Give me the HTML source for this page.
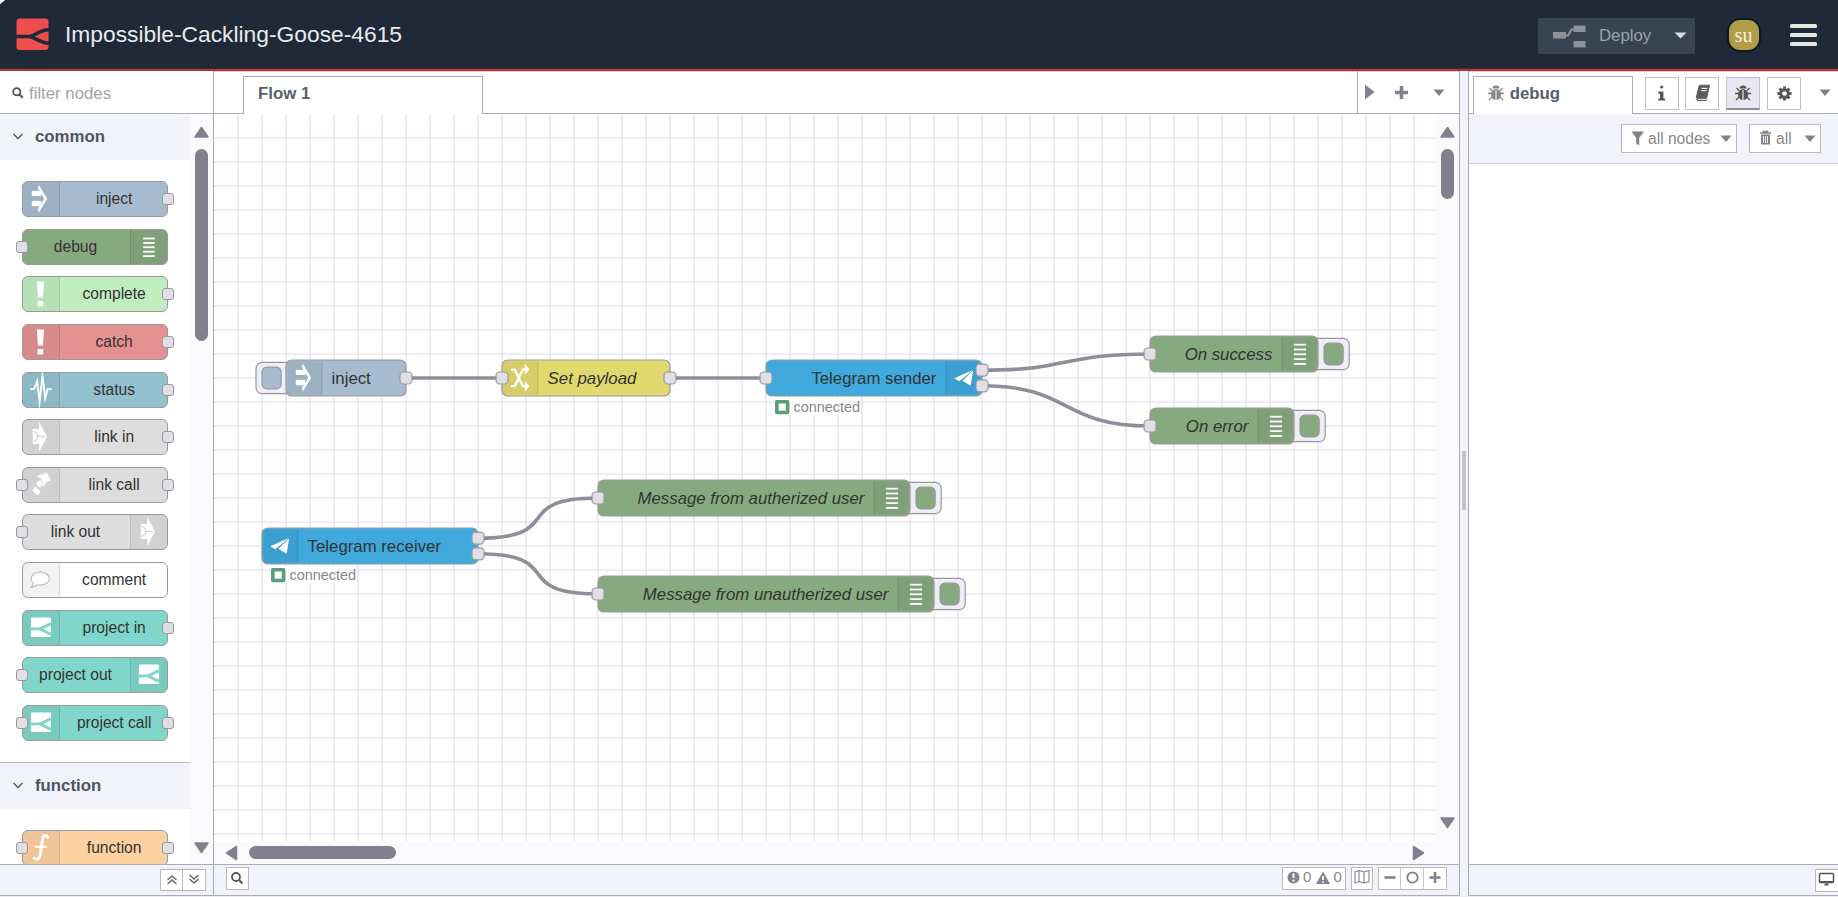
<!DOCTYPE html><html><head><meta charset="utf-8"><style>
*{box-sizing:border-box}
html,body{margin:0;padding:0}
body{width:1838px;height:897px;overflow:hidden;position:relative;background:#fff;font-family:"Liberation Sans",sans-serif;color:#333}
.abs{position:absolute}
#hdr{position:absolute;left:0;top:0;width:1838px;height:68px;background:#1f2937}
#hdrline{position:absolute;left:0;top:68px;width:1838px;height:4px;background:linear-gradient(to bottom,#5a1a24 0,#5a1a24 1px,#9f4149 1px,#9f4149 2px,#963b42 2px,#963b42 3px,#efc7ca 3px,#efc7ca 4px)}
#title{position:absolute;left:65px;top:21.3px;font-size:22.8px;color:#e8e9ec;white-space:nowrap;line-height:26px}
#deploy{position:absolute;left:1538px;top:17.5px;width:157px;height:36.5px;background:#394453}
#deploy .t{position:absolute;left:1600px;top:0}
/* palette */
#pal{position:absolute;left:0;top:71px;width:213px;height:824px;background:#fff}
.pn{position:absolute;left:22px;width:146px;height:36.2px;border:1px solid #9a9a9a;border-radius:6px}
.pi{position:absolute;top:0;width:37px;height:34.2px;background:rgba(0,0,0,0.05)}
.pi.L{left:0;border-right:1px solid rgba(0,0,0,0.1);border-radius:5px 0 0 5px}
.pi.R{right:0;border-left:1px solid rgba(0,0,0,0.1);border-radius:0 5px 5px 0}
.pi svg{position:absolute;left:0;top:-1px}
.pl{position:absolute;top:0.1px;height:33.5px;line-height:33.5px;font-size:15.6px;color:#333;text-align:center;white-space:nowrap}
.pl.L{left:38.3px;right:0}
.pl.R{left:-2px;right:37px}
.pp{position:absolute;top:11.4px;width:12px;height:12px;background:#dfdfe5;border:1px solid #999;border-radius:3px}
.pp.in{left:-7px}
.pp.out{right:-7px}
/* canvas */
#cv{position:absolute;left:214px;top:114px}
.nd{stroke:#999;stroke-width:1}
.shade{fill:#000;fill-opacity:0.05;stroke:none}
.shadeb{stroke:#000;stroke-opacity:0.1;stroke-width:1;fill:none}
.nl{font-family:"Liberation Sans",sans-serif;font-size:14px;fill:#333}
.port{fill:#dfdfe5;stroke:#999;stroke-width:1}
.nbb{fill:#eeeef6;stroke:#999;stroke-width:1}
.nbt{stroke:#999;stroke-width:1}
.sbg{fill:#fff}
.sl{font-family:"Liberation Sans",sans-serif;font-size:12px;fill:#888}
.btn{position:absolute;background:#fff;border:1px solid #b7b7c0}
</style></head><body>
<div id="hdr"></div><div id="hdrline"></div>
<svg class="abs" style="left:0;top:0" width="8" height="8" viewBox="0 0 8 8"><path d="M0 0H5.2L0 4.2z" fill="#f4f7fb"/></svg>
<svg class="abs" style="left:16px;top:17.5px" width="33" height="33" viewBox="0 0 33 33"><rect x="0.5" y="0.5" width="32" height="31.5" rx="3" fill="#ee4e4e"/><path d="M0 18.5 C6 18.5 9 18.6 13 18.5 C19 18.2 24 11.5 33 11.8 M13 18.5 C19 19 24 25 33 25.2" fill="none" stroke="#1f2937" stroke-width="3.6"/></svg>
<div id="title">Impossible-Cackling-Goose-4615</div>
<div id="deploy"></div>
<svg class="abs" style="left:1550px;top:24px" width="40" height="26" viewBox="0 0 40 26"><g fill="#8b929c"><rect x="3" y="8" width="13" height="6.5"/><rect x="23.5" y="1.6" width="12" height="6.4"/><rect x="23.5" y="17" width="12" height="6.4"/></g><path d="M15 11.5L18 11.5 21.5 5.5 24 5.5" fill="none" stroke="#8b929c" stroke-width="2.2"/></svg>
<div class="abs" style="left:1599px;top:26px;font-size:16.8px;color:#9aa1ab;line-height:20px">Deploy</div>
<svg class="abs" style="left:1674px;top:32px" width="13" height="7" viewBox="0 0 13 7"><path d="M0.5 0.5h12l-6 6z" fill="#d7dbe0"/></svg>
<div class="abs" style="left:1726.5px;top:17.8px;width:34px;height:34.5px;border-radius:13px;border:2px solid #14161b;background:#b09d48;color:#f5f0dc;font-family:'Liberation Serif',serif;font-size:20px;text-align:center;line-height:31px">su</div>
<div class="abs" style="left:1789.5px;top:24px;width:27.5px;height:4.2px;background:#e5e8e3;border-radius:1.5px"></div>
<div class="abs" style="left:1789.5px;top:33px;width:27.5px;height:4.2px;background:#e5e8e3;border-radius:1.5px"></div>
<div class="abs" style="left:1789.5px;top:41.5px;width:27.5px;height:4.2px;background:#e5e8e3;border-radius:1.5px"></div>
<div id="pal">
</div>
<div class="abs" style="left:0;top:113px;width:213px;height:1px;background:#ababb6"></div>
<svg class="abs" style="left:12px;top:87px" width="12" height="12" viewBox="0 0 12 12"><circle cx="4.8" cy="4.8" r="3.6" fill="none" stroke="#555" stroke-width="1.8"/><path d="M7.5 7.5l3.3 3.3" stroke="#555" stroke-width="2.2"/></svg>
<div class="abs" style="left:29px;top:84px;font-size:16.8px;color:#a3a3a3;line-height:20px">filter nodes</div>
<div class="abs" style="left:0;top:114px;width:190px;height:46px;background:#f2f2fb"></div>
<svg class="abs" style="left:12px;top:132px" width="12" height="9" viewBox="0 0 12 9"><path d="M1.5 2l4.5 4.5 4.5-4.5" fill="none" stroke="#555" stroke-width="1.4"/></svg>
<div class="abs" style="left:35px;top:127px;font-size:16.8px;font-weight:bold;color:#4b5563;line-height:20px">common</div>
<div class="abs" style="left:0;top:762px;width:190px;height:1px;background:#b9b9c2"></div>
<div class="abs" style="left:0;top:763px;width:190px;height:46px;background:#f2f2fb"></div>
<svg class="abs" style="left:12px;top:781px" width="12" height="9" viewBox="0 0 12 9"><path d="M1.5 2l4.5 4.5 4.5-4.5" fill="none" stroke="#555" stroke-width="1.4"/></svg>
<div class="abs" style="left:35px;top:776px;font-size:16.8px;font-weight:bold;color:#4b5563;line-height:20px">function</div>
<div class="pn" style="top:180.6px;background:#a6bbcf">
<div class="pi L"><svg width="38" height="36" viewBox="0 0 38 36" style="position:absolute;left:-1px;top:-1px"><g fill="#fff"><rect x="9.8" y="9.9" width="9.4" height="5.1"/><rect x="9.8" y="19.9" width="9.4" height="5.3"/><path d="M16.9 3.9L25.2 17.75 16.9 31.6 15.7 28.5 22.2 17.75 15.7 7z"/></g></svg></div><div class="pl L">inject</div>
<div class="pp out"></div>
</div>
<div class="pn" style="top:228.5px;background:#87a980">
<div class="pi R"><svg width="38" height="36" viewBox="0 0 38 36" style="position:absolute;left:-1px;top:-1px"><g fill="#fff"><rect x="13.2" y="8.60" width="11.4" height="1.8"/><rect x="13.2" y="13.00" width="11.4" height="1.8"/><rect x="13.2" y="17.40" width="11.4" height="1.8"/><rect x="13.2" y="21.80" width="11.4" height="1.8"/><rect x="13.2" y="26.20" width="11.4" height="1.8"/></g></svg></div><div class="pl R">debug</div>
<div class="pp in"></div>
</div>
<div class="pn" style="top:275.9px;background:#c0edc0">
<div class="pi L"><svg width="38" height="36" viewBox="0 0 38 36" style="position:absolute;left:-1px;top:-1px"><g fill="#fff"><path d="M14.9 5.6H22.1L21 21.4H15.9z"/><rect x="15.6" y="25" width="5.6" height="5.4"/></g></svg></div><div class="pl L">complete</div>
<div class="pp out"></div>
</div>
<div class="pn" style="top:323.9px;background:#e49191">
<div class="pi L"><svg width="38" height="36" viewBox="0 0 38 36" style="position:absolute;left:-1px;top:-1px"><g fill="#fff"><path d="M14.9 5.6H22.1L21 21.4H15.9z"/><rect x="15.6" y="25" width="5.6" height="5.4"/></g></svg></div><div class="pl L">catch</div>
<div class="pp out"></div>
</div>
<div class="pn" style="top:371.7px;background:#94c1d0">
<div class="pi L"><svg width="38" height="36" viewBox="0 0 38 36" style="position:absolute;left:-1px;top:-1px"><path d="M8 17.1H12L15.2 9.1 17.6 30 20.5 3.7 23.2 26.4 25.6 17.1H29.9" fill="none" stroke="#fff" stroke-width="1.9" stroke-linejoin="miter" stroke-miterlimit="10"/></svg></div><div class="pl L">status</div>
<div class="pp out"></div>
</div>
<div class="pn" style="top:419.1px;background:#dddddd">
<div class="pi L"><svg width="38" height="36" viewBox="0 0 38 36" style="position:absolute;left:-1px;top:-1px"><path d="M17.2 2.9L25 17.4 17.2 32.4V25H10.7V9.9H17.2z" fill="#fff"/><path d="M10.7 12.4A5 5 0 0 1 10.7 22.4M15.7 17.4H23.5" fill="none" stroke="#d2d2d2" stroke-width="1.1"/></svg></div><div class="pl L">link in</div>
<div class="pp out"></div>
</div>
<div class="pn" style="top:466.7px;background:#dddddd">
<div class="pi L"><svg width="38" height="36" viewBox="0 0 38 36" style="position:absolute;left:-1px;top:-1px"><g fill="#fff"><path d="M14.5 9L24.8 5.8 28.8 13.4 25.2 14.6 21.5 19.4 18 15.8 19.6 11.7z"/><path d="M10.3 23.4L13.4 19.4 18.7 24.8 15.6 28.3z"/></g><circle cx="17.8" cy="16.9" r="3.4" fill="#fff" stroke="#d4d4d4" stroke-width="0.8"/></svg></div><div class="pl L">link call</div>
<div class="pp in"></div>
<div class="pp out"></div>
</div>
<div class="pn" style="top:514.1px;background:#dddddd">
<div class="pi R"><svg width="38" height="36" viewBox="0 0 38 36" style="position:absolute;left:-1px;top:-1px"><path d="M17.2 2.9L25 17.4 17.2 32.4V25H10.7V9.9H17.2z" fill="#fff"/><path d="M10.7 12.4A5 5 0 0 1 10.7 22.4M15.7 17.4H23.5" fill="none" stroke="#d2d2d2" stroke-width="1.1"/></svg></div><div class="pl R">link out</div>
<div class="pp in"></div>
</div>
<div class="pn" style="top:561.7px;background:#ffffff">
<div class="pi L"><svg width="38" height="36" viewBox="0 0 38 36" style="position:absolute;left:-1px;top:-1px"><path d="M18.3 10.1c5 0 9.1 2.9 9.1 6.5s-4.1 6.5-9.1 6.5c-1 0-2-.1-2.9-.3-2 1.6-4.4 2.6-6.5 2.6 1.3-1.2 2.4-2.6 2.6-4.1-1.6-1.2-2.4-2.8-2.4-4.7 0-3.6 4.1-6.5 9.2-6.5z" fill="#fff" stroke="#bdbdbd" stroke-width="1.1"/></svg></div><div class="pl L">comment</div>
</div>
<div class="pn" style="top:609.7px;background:#80d6cb">
<div class="pi L"><svg width="38" height="36" viewBox="0 0 38 36" style="position:absolute;left:-1px;top:-1px"><rect x="8.9" y="7.6" width="20.1" height="19.4" rx="1.2" fill="#fff"/><path d="M8.5 19C13.5 19 16.5 19 19 18.4 22.5 17.4 25 14.4 29.5 14.1M17.8 19C21.8 19.8 24.2 23.5 29.5 23.9" fill="none" stroke="#80d6cb" stroke-width="3"/></svg></div><div class="pl L">project in</div>
<div class="pp out"></div>
</div>
<div class="pn" style="top:657.1px;background:#80d6cb">
<div class="pi R"><svg width="38" height="36" viewBox="0 0 38 36" style="position:absolute;left:-1px;top:-1px"><rect x="8.9" y="7.6" width="20.1" height="19.4" rx="1.2" fill="#fff"/><path d="M8.5 19C13.5 19 16.5 19 19 18.4 22.5 17.4 25 14.4 29.5 14.1M17.8 19C21.8 19.8 24.2 23.5 29.5 23.9" fill="none" stroke="#80d6cb" stroke-width="3"/></svg></div><div class="pl R">project out</div>
<div class="pp in"></div>
</div>
<div class="pn" style="top:704.7px;background:#80d6cb">
<div class="pi L"><svg width="38" height="36" viewBox="0 0 38 36" style="position:absolute;left:-1px;top:-1px"><rect x="8.9" y="7.6" width="20.1" height="19.4" rx="1.2" fill="#fff"/><path d="M8.5 19C13.5 19 16.5 19 19 18.4 22.5 17.4 25 14.4 29.5 14.1M17.8 19C21.8 19.8 24.2 23.5 29.5 23.9" fill="none" stroke="#80d6cb" stroke-width="3"/></svg></div><div class="pl L">project call</div>
<div class="pp in"></div>
<div class="pp out"></div>
</div>
<div class="pn" style="top:830.1px;background:#fdd0a2">
<div class="pi L"><svg width="38" height="36" viewBox="0 0 38 36" style="position:absolute;left:-1px;top:-1px"><path d="M25.6 7.6C25 5.2 22.6 4.6 21.3 6.6 20.4 8.2 18.6 24 17.7 26.8 17 29.4 14.2 29.8 12.2 28" fill="none" stroke="#fff" stroke-width="2.9" stroke-linecap="round"/><path d="M13 16.8H24.5" stroke="#fff" stroke-width="2"/></svg></div><div class="pl L">function</div>
<div class="pp in"></div>
<div class="pp out"></div>
</div>
<div class="abs" style="left:190px;top:114px;width:23px;height:750px;background:#fafafc"></div>
<svg class="abs" style="left:193px;top:126px" width="17" height="12" viewBox="0 0 17 12"><path d="M8.5 1.5l6.5 9.5h-13z" fill="#81808e" stroke="#81808e" stroke-width="1.5" stroke-linejoin="round"/></svg>
<div class="abs" style="left:195px;top:149px;width:13px;height:192px;border-radius:6.5px;background:#81808e"></div>
<svg class="abs" style="left:193px;top:842px" width="17" height="12" viewBox="0 0 17 12"><path d="M8.5 10.5l6.5-9.5h-13z" fill="#81808e" stroke="#81808e" stroke-width="1.5" stroke-linejoin="round"/></svg>
<div class="abs" style="left:0;top:864px;width:213px;height:32px;background:#f2f2fb;border-top:1px solid #ababb6;border-bottom:1px solid #ababb6"></div>
<div class="btn" style="left:160px;top:869px;width:23px;height:22px"></div>
<div class="btn" style="left:182px;top:869px;width:24px;height:22px"></div>
<svg class="abs" style="left:165px;top:873px" width="14" height="14" viewBox="0 0 14 14"><path d="M2.5 7l4.5-4 4.5 4 M2.5 11l4.5-4 4.5 4" fill="none" stroke="#666" stroke-width="1.4"/></svg>
<svg class="abs" style="left:187px;top:872px" width="14" height="14" viewBox="0 0 14 14"><path d="M2.5 3l4.5 4 4.5-4 M2.5 7l4.5 4 4.5-4" fill="none" stroke="#666" stroke-width="1.4"/></svg>
<div class="abs" style="left:213px;top:71px;width:1px;height:825px;background:#ababb6"></div>
<div class="abs" style="left:214px;top:113px;width:1246px;height:1px;background:#ababb6"></div>
<div class="abs" style="left:243px;top:76px;width:240px;height:38px;background:#fff;border:1px solid #ababb6;border-bottom:none"></div>
<div class="abs" style="left:258px;top:84px;font-size:16.8px;font-weight:bold;color:#555f6b;line-height:20px">Flow 1</div>
<div class="abs" style="left:1357px;top:71px;width:1px;height:42px;background:#ababb6"></div>
<svg class="abs" style="left:1364px;top:84px" width="12" height="16" viewBox="0 0 12 16"><path d="M1 0.5l9.5 7.5-9.5 7.5z" fill="#81808e"/></svg>
<svg class="abs" style="left:1394px;top:85px" width="15" height="15" viewBox="0 0 15 15"><path d="M7.5 1v13 M1 7.5h13" stroke="#81808e" stroke-width="3.5"/></svg>
<svg class="abs" style="left:1433px;top:89px" width="12" height="8" viewBox="0 0 12 8"><path d="M0.5 0.5h11l-5.5 6.5z" fill="#81808e"/></svg>
<svg id="cv" width="1222" height="727" viewBox="0 0 1222 727"><rect width="1222" height="727" fill="#fff"/><g transform="scale(1.2)"><g stroke="#dcdbee" stroke-width="1"><line x1="20" y1="0" x2="20" y2="620"/><line x1="40" y1="0" x2="40" y2="620"/><line x1="60" y1="0" x2="60" y2="620"/><line x1="80" y1="0" x2="80" y2="620"/><line x1="100" y1="0" x2="100" y2="620"/><line x1="120" y1="0" x2="120" y2="620"/><line x1="140" y1="0" x2="140" y2="620"/><line x1="160" y1="0" x2="160" y2="620"/><line x1="180" y1="0" x2="180" y2="620"/><line x1="200" y1="0" x2="200" y2="620"/><line x1="220" y1="0" x2="220" y2="620"/><line x1="240" y1="0" x2="240" y2="620"/><line x1="260" y1="0" x2="260" y2="620"/><line x1="280" y1="0" x2="280" y2="620"/><line x1="300" y1="0" x2="300" y2="620"/><line x1="320" y1="0" x2="320" y2="620"/><line x1="340" y1="0" x2="340" y2="620"/><line x1="360" y1="0" x2="360" y2="620"/><line x1="380" y1="0" x2="380" y2="620"/><line x1="400" y1="0" x2="400" y2="620"/><line x1="420" y1="0" x2="420" y2="620"/><line x1="440" y1="0" x2="440" y2="620"/><line x1="460" y1="0" x2="460" y2="620"/><line x1="480" y1="0" x2="480" y2="620"/><line x1="500" y1="0" x2="500" y2="620"/><line x1="520" y1="0" x2="520" y2="620"/><line x1="540" y1="0" x2="540" y2="620"/><line x1="560" y1="0" x2="560" y2="620"/><line x1="580" y1="0" x2="580" y2="620"/><line x1="600" y1="0" x2="600" y2="620"/><line x1="620" y1="0" x2="620" y2="620"/><line x1="640" y1="0" x2="640" y2="620"/><line x1="660" y1="0" x2="660" y2="620"/><line x1="680" y1="0" x2="680" y2="620"/><line x1="700" y1="0" x2="700" y2="620"/><line x1="720" y1="0" x2="720" y2="620"/><line x1="740" y1="0" x2="740" y2="620"/><line x1="760" y1="0" x2="760" y2="620"/><line x1="780" y1="0" x2="780" y2="620"/><line x1="800" y1="0" x2="800" y2="620"/><line x1="820" y1="0" x2="820" y2="620"/><line x1="840" y1="0" x2="840" y2="620"/><line x1="860" y1="0" x2="860" y2="620"/><line x1="880" y1="0" x2="880" y2="620"/><line x1="900" y1="0" x2="900" y2="620"/><line x1="920" y1="0" x2="920" y2="620"/><line x1="940" y1="0" x2="940" y2="620"/><line x1="960" y1="0" x2="960" y2="620"/><line x1="980" y1="0" x2="980" y2="620"/><line x1="1000" y1="0" x2="1000" y2="620"/><line x1="1020" y1="0" x2="1020" y2="620"/><line x1="0" y1="20" x2="1030" y2="20"/><line x1="0" y1="40" x2="1030" y2="40"/><line x1="0" y1="60" x2="1030" y2="60"/><line x1="0" y1="80" x2="1030" y2="80"/><line x1="0" y1="100" x2="1030" y2="100"/><line x1="0" y1="120" x2="1030" y2="120"/><line x1="0" y1="140" x2="1030" y2="140"/><line x1="0" y1="160" x2="1030" y2="160"/><line x1="0" y1="180" x2="1030" y2="180"/><line x1="0" y1="200" x2="1030" y2="200"/><line x1="0" y1="220" x2="1030" y2="220"/><line x1="0" y1="240" x2="1030" y2="240"/><line x1="0" y1="260" x2="1030" y2="260"/><line x1="0" y1="280" x2="1030" y2="280"/><line x1="0" y1="300" x2="1030" y2="300"/><line x1="0" y1="320" x2="1030" y2="320"/><line x1="0" y1="340" x2="1030" y2="340"/><line x1="0" y1="360" x2="1030" y2="360"/><line x1="0" y1="380" x2="1030" y2="380"/><line x1="0" y1="400" x2="1030" y2="400"/><line x1="0" y1="420" x2="1030" y2="420"/><line x1="0" y1="440" x2="1030" y2="440"/><line x1="0" y1="460" x2="1030" y2="460"/><line x1="0" y1="480" x2="1030" y2="480"/><line x1="0" y1="500" x2="1030" y2="500"/><line x1="0" y1="520" x2="1030" y2="520"/><line x1="0" y1="540" x2="1030" y2="540"/><line x1="0" y1="560" x2="1030" y2="560"/><line x1="0" y1="580" x2="1030" y2="580"/><line x1="0" y1="600" x2="1030" y2="600"/></g><path d="M160 220C235 220 165 220 240 220" fill="none" stroke="#fff" stroke-opacity="0.4" stroke-width="5"/><path d="M160 220C235 220 165 220 240 220" fill="none" stroke="#8e8e99" stroke-width="3"/><path d="M380 220C455 220 385 220 460 220" fill="none" stroke="#fff" stroke-opacity="0.4" stroke-width="5"/><path d="M380 220C455 220 385 220 460 220" fill="none" stroke="#8e8e99" stroke-width="3"/><path d="M640 213.5C715 213.5 705 200 780 200" fill="none" stroke="#fff" stroke-opacity="0.4" stroke-width="5"/><path d="M640 213.5C715 213.5 705 200 780 200" fill="none" stroke="#8e8e99" stroke-width="3"/><path d="M640 226.5C715 226.5 705 260 780 260" fill="none" stroke="#fff" stroke-opacity="0.4" stroke-width="5"/><path d="M640 226.5C715 226.5 705 260 780 260" fill="none" stroke="#8e8e99" stroke-width="3"/><path d="M220 353.5C295 353.5 245 320 320 320" fill="none" stroke="#fff" stroke-opacity="0.4" stroke-width="5"/><path d="M220 353.5C295 353.5 245 320 320 320" fill="none" stroke="#8e8e99" stroke-width="3"/><path d="M220 366.5C295 366.5 245 400 320 400" fill="none" stroke="#fff" stroke-opacity="0.4" stroke-width="5"/><path d="M220 366.5C295 366.5 245 400 320 400" fill="none" stroke="#8e8e99" stroke-width="3"/><g transform="translate(60,205)"><rect class="nbb" x="-25" y="2" rx="5" ry="5" width="32" height="26"/><rect class="nbt" x="-20" y="6" rx="4" ry="4" width="16" height="18" fill="#a6bbcf"/><rect class="nd" rx="5" ry="5" width="100" height="30" fill="#a6bbcf"/><path class="shade" d="M5 1h25v28h-25a4 4 0 0 1-4-4v-20a4 4 0 0 1 4-4z"/><path class="shadeb" d="M30 1v28"/><g transform="translate(0,0)"><g transform="scale(0.833333)"><g fill="#fff"><rect x="9.8" y="9.9" width="9.4" height="5.1"/><rect x="9.8" y="19.9" width="9.4" height="5.3"/><path d="M16.9 3.9L25.2 17.75 16.9 31.6 15.7 28.5 22.2 17.75 15.7 7z"/></g></g></g><text class="nl" x="38" y="20" text-anchor="start">inject</text><rect class="port" x="95" y="10" rx="3" ry="3" width="10" height="10"/></g><g transform="translate(240,205)"><rect class="nd" rx="5" ry="5" width="140" height="30" fill="#e2d96e"/><path class="shade" d="M5 1h25v28h-25a4 4 0 0 1-4-4v-20a4 4 0 0 1 4-4z"/><path class="shadeb" d="M30 1v28"/><g transform="translate(0,0)"><g transform="scale(0.833333)"><g fill="none" stroke="#fff" stroke-width="2.4"><path d="M8.9 9.6H12.8L20.8 26.1H24"/><path d="M8.9 26.1H12.8L20.8 9.6H24"/></g><g fill="#fff"><path d="M22.8 3.8L27.3 9.4 22.8 14.8z"/><path d="M22.8 20.7L27.3 26.3 22.8 31.9z"/></g></g></g><text class="nl" x="38" y="20" font-style="italic" text-anchor="start">Set payload</text><rect class="port" x="-5" y="10" rx="3" ry="3" width="10" height="10"/><rect class="port" x="135" y="10" rx="3" ry="3" width="10" height="10"/></g><g transform="translate(460,205)"><rect class="nd" rx="5" ry="5" width="180" height="30" fill="#3fa9dd"/><path class="shade" d="M150 1h25a4 4 0 0 1 4 4v20a4 4 0 0 1-4 4h-25z"/><path class="shadeb" d="M150 1v28"/><g transform="translate(150,0)"><g transform="scale(0.833333)"><g fill="#fff"><path d="M8.3 18.2L26.8 10.1 21.6 14.6 13.2 21.2z"/><path d="M16.4 20.8L27.2 10.6 24.6 25.8z"/></g></g></g><text class="nl" x="142" y="20" text-anchor="end">Telegram sender</text><rect class="port" x="-5" y="10" rx="3" ry="3" width="10" height="10"/><rect class="port" x="175" y="3.5" rx="3" ry="3" width="10" height="10"/><rect class="port" x="175" y="16.5" rx="3" ry="3" width="10" height="10"/><rect class="sbg" x="8" y="32" width="60" height="14"/><rect x="9" y="34.8" width="9" height="9" fill="#fff" stroke="#5a9c7c" stroke-width="3" stroke-linejoin="round"/><text class="sl" x="23" y="43.3">connected</text></g><g transform="translate(780,185)"><rect class="nbb" x="134" y="2" rx="5" ry="5" width="32" height="26"/><rect class="nbt" x="145" y="6" rx="4" ry="4" width="16" height="18" fill="#87a980"/><rect class="nd" rx="5" ry="5" width="140" height="30" fill="#87a980"/><path class="shade" d="M110 1h25a4 4 0 0 1 4 4v20a4 4 0 0 1-4 4h-25z"/><path class="shadeb" d="M110 1v28"/><g transform="translate(110,0)"><g transform="scale(0.833333)"><g fill="#fff"><rect x="12" y="7.80" width="12" height="1.8"/><rect x="12" y="12.60" width="12" height="1.8"/><rect x="12" y="17.40" width="12" height="1.8"/><rect x="12" y="22.20" width="12" height="1.8"/><rect x="12" y="27.00" width="12" height="1.8"/></g></g></g><text class="nl" x="102" y="20" font-style="italic" text-anchor="end">On success</text><rect class="port" x="-5" y="10" rx="3" ry="3" width="10" height="10"/></g><g transform="translate(780,245)"><rect class="nbb" x="114" y="2" rx="5" ry="5" width="32" height="26"/><rect class="nbt" x="125" y="6" rx="4" ry="4" width="16" height="18" fill="#87a980"/><rect class="nd" rx="5" ry="5" width="120" height="30" fill="#87a980"/><path class="shade" d="M90 1h25a4 4 0 0 1 4 4v20a4 4 0 0 1-4 4h-25z"/><path class="shadeb" d="M90 1v28"/><g transform="translate(90,0)"><g transform="scale(0.833333)"><g fill="#fff"><rect x="12" y="7.80" width="12" height="1.8"/><rect x="12" y="12.60" width="12" height="1.8"/><rect x="12" y="17.40" width="12" height="1.8"/><rect x="12" y="22.20" width="12" height="1.8"/><rect x="12" y="27.00" width="12" height="1.8"/></g></g></g><text class="nl" x="82" y="20" font-style="italic" text-anchor="end">On error</text><rect class="port" x="-5" y="10" rx="3" ry="3" width="10" height="10"/></g><g transform="translate(40,345)"><rect class="nd" rx="5" ry="5" width="180" height="30" fill="#3fa9dd"/><path class="shade" d="M5 1h25v28h-25a4 4 0 0 1-4-4v-20a4 4 0 0 1 4-4z"/><path class="shadeb" d="M30 1v28"/><g transform="translate(0,0)"><g transform="scale(0.833333)"><g fill="#fff"><path d="M8.3 18.2L26.8 10.1 21.6 14.6 13.2 21.2z"/><path d="M16.4 20.8L27.2 10.6 24.6 25.8z"/></g></g></g><text class="nl" x="38" y="20" text-anchor="start">Telegram receiver</text><rect class="port" x="175" y="3.5" rx="3" ry="3" width="10" height="10"/><rect class="port" x="175" y="16.5" rx="3" ry="3" width="10" height="10"/><rect class="sbg" x="8" y="32" width="60" height="14"/><rect x="9" y="34.8" width="9" height="9" fill="#fff" stroke="#5a9c7c" stroke-width="3" stroke-linejoin="round"/><text class="sl" x="23" y="43.3">connected</text></g><g transform="translate(320,305)"><rect class="nbb" x="254" y="2" rx="5" ry="5" width="32" height="26"/><rect class="nbt" x="265" y="6" rx="4" ry="4" width="16" height="18" fill="#87a980"/><rect class="nd" rx="5" ry="5" width="260" height="30" fill="#87a980"/><path class="shade" d="M230 1h25a4 4 0 0 1 4 4v20a4 4 0 0 1-4 4h-25z"/><path class="shadeb" d="M230 1v28"/><g transform="translate(230,0)"><g transform="scale(0.833333)"><g fill="#fff"><rect x="12" y="7.80" width="12" height="1.8"/><rect x="12" y="12.60" width="12" height="1.8"/><rect x="12" y="17.40" width="12" height="1.8"/><rect x="12" y="22.20" width="12" height="1.8"/><rect x="12" y="27.00" width="12" height="1.8"/></g></g></g><text class="nl" x="222" y="20" font-style="italic" text-anchor="end">Message from autherized user</text><rect class="port" x="-5" y="10" rx="3" ry="3" width="10" height="10"/></g><g transform="translate(320,385)"><rect class="nbb" x="274" y="2" rx="5" ry="5" width="32" height="26"/><rect class="nbt" x="285" y="6" rx="4" ry="4" width="16" height="18" fill="#87a980"/><rect class="nd" rx="5" ry="5" width="280" height="30" fill="#87a980"/><path class="shade" d="M250 1h25a4 4 0 0 1 4 4v20a4 4 0 0 1-4 4h-25z"/><path class="shadeb" d="M250 1v28"/><g transform="translate(250,0)"><g transform="scale(0.833333)"><g fill="#fff"><rect x="12" y="7.80" width="12" height="1.8"/><rect x="12" y="12.60" width="12" height="1.8"/><rect x="12" y="17.40" width="12" height="1.8"/><rect x="12" y="22.20" width="12" height="1.8"/><rect x="12" y="27.00" width="12" height="1.8"/></g></g></g><text class="nl" x="242" y="20" font-style="italic" text-anchor="end">Message from unautherized user</text><rect class="port" x="-5" y="10" rx="3" ry="3" width="10" height="10"/></g></g></svg>
<div class="abs" style="left:1436px;top:114px;width:23px;height:750px;background:#fafafc"></div>
<div class="abs" style="left:214px;top:841px;width:1222px;height:23px;background:#fafafc"></div>
<svg class="abs" style="left:1439px;top:126px" width="17" height="12" viewBox="0 0 17 12"><path d="M8.5 1.5l6.5 9.5h-13z" fill="#81808e" stroke="#81808e" stroke-width="1.5" stroke-linejoin="round"/></svg>
<div class="abs" style="left:1441px;top:149px;width:13px;height:50px;border-radius:6.5px;background:#81808e"></div>
<svg class="abs" style="left:1439px;top:817px" width="17" height="12" viewBox="0 0 17 12"><path d="M8.5 10.5l6.5-9.5h-13z" fill="#81808e" stroke="#81808e" stroke-width="1.5" stroke-linejoin="round"/></svg>
<svg class="abs" style="left:225px;top:845px" width="13" height="16" viewBox="0 0 13 16"><path d="M1.5 8l10-6.5v13z" fill="#81808e" stroke="#81808e" stroke-width="1.5" stroke-linejoin="round"/></svg>
<div class="abs" style="left:249px;top:846px;width:147px;height:13px;border-radius:6.5px;background:#81808e"></div>
<svg class="abs" style="left:1412px;top:845px" width="13" height="16" viewBox="0 0 13 16"><path d="M11.5 8l-10-6.5v13z" fill="#81808e" stroke="#81808e" stroke-width="1.5" stroke-linejoin="round"/></svg>
<div class="abs" style="left:214px;top:864px;width:1246px;height:32px;background:#f2f2fb;border-top:1px solid #ababb6;border-bottom:1px solid #ababb6"></div>
<div class="btn" style="left:226px;top:867px;width:23px;height:23px"></div>
<svg class="abs" style="left:230px;top:871px" width="15" height="15" viewBox="0 0 15 15"><circle cx="6" cy="6" r="4" fill="none" stroke="#555" stroke-width="1.8"/><path d="M9 9l3.5 3.5" stroke="#555" stroke-width="2"/></svg>
<div class="btn" style="left:1282px;top:867px;width:64px;height:23px"></div>
<svg class="abs" style="left:1286.5px;top:870px" width="58" height="15" viewBox="0 0 58 15"><circle cx="6.5" cy="7.5" r="6" fill="#81808e"/><path d="M6.5 3.5v4.5" stroke="#fff" stroke-width="2"/><circle cx="6.5" cy="10.7" r="1.1" fill="#fff"/><path d="M36 1.5l7 12.5h-14z" fill="#81808e"/><path d="M36 6v4" stroke="#fff" stroke-width="1.8"/><circle cx="36" cy="12" r="0.9" fill="#fff"/></svg>
<div class="abs" style="left:1303px;top:868px;font-size:15px;color:#888;line-height:18px">0</div>
<div class="abs" style="left:1333.5px;top:868px;font-size:15px;color:#888;line-height:18px">0</div>
<div class="btn" style="left:1351px;top:867px;width:22px;height:23px"></div>
<svg class="abs" style="left:1353px;top:869px" width="18" height="16" viewBox="0 0 18 16"><path d="M2 3l4-1.5 5 1.5 5-1.5v11l-5 1.5-5-1.5-4 1.5z M6 1.5v11 M11 3v11" fill="none" stroke="#81808e" stroke-width="1.1"/></svg>
<div class="btn" style="left:1378px;top:867px;width:69px;height:23px"></div>
<div class="abs" style="left:1400px;top:868px;width:1px;height:21px;background:#c5c5cc"></div><div class="abs" style="left:1423px;top:868px;width:1px;height:21px;background:#c5c5cc"></div>
<svg class="abs" style="left:1378.5px;top:866px" width="69" height="23" viewBox="0 0 69 23"><path d="M5.5 11.5h11" stroke="#81808e" stroke-width="2.6"/><circle cx="33.5" cy="11.5" r="5.2" fill="none" stroke="#81808e" stroke-width="1.8"/><path d="M50.5 11.5h11 M56 6v11" stroke="#81808e" stroke-width="2.6"/></svg>
<div class="abs" style="left:1459px;top:71px;width:1px;height:825px;background:#ababb6"></div>
<div class="abs" style="left:1460px;top:71px;width:8px;height:825px;background:#f2f2fb"></div>
<div class="abs" style="left:1468px;top:71px;width:1px;height:825px;background:#ababb6"></div>
<div class="abs" style="left:1462px;top:451px;width:4px;height:59px;background:#c3c3cc"></div>
<div class="abs" style="left:1469px;top:113px;width:369px;height:1px;background:#ababb6"></div>
<div class="abs" style="left:1473px;top:76px;width:160px;height:38px;background:#fff;border:1px solid #ababb6;border-bottom:none"></div>
<svg class="abs" style="left:1487px;top:84px" width="18" height="17" viewBox="0 0 18 17"><g fill="#888"><ellipse cx="9" cy="10.5" rx="5" ry="5.5"/><path d="M5.5 4.5a3.5 3 0 0 1 7 0z"/></g><g stroke="#888" stroke-width="1.3" fill="none"><path d="M1 9.5h16 M2.5 4l2.5 2.5 M15.5 4l-2.5 2.5 M2 16l3-3 M16 16l-3-3"/></g><path d="M9 6v10" stroke="#fff" stroke-width="1"/></svg>
<div class="abs" style="left:1509.7px;top:84px;font-size:16.8px;font-weight:bold;color:#555f6b;line-height:20px">debug</div>
<div class="abs" style="left:1645px;top:77px;width:33.5px;height:33px;background:#fff;border:1px solid #c0c0c8;"></div>
<div class="abs" style="left:1685px;top:77px;width:33.5px;height:33px;background:#fff;border:1px solid #c0c0c8;"></div>
<div class="abs" style="left:1726px;top:77px;width:33.5px;height:33px;background:#e6e7f2;border:1px solid #c0c0c8;border-bottom:2px solid #8d8d99;"></div>
<div class="abs" style="left:1767px;top:77px;width:33.5px;height:33px;background:#fff;border:1px solid #c0c0c8;"></div>
<svg class="abs" style="left:1645px;top:77px" width="34" height="33" viewBox="0 0 34 33"><g fill="#555"><circle cx="16.7" cy="10" r="1.6"/><path d="M13.4 14.5h5v6.9h1.6v2.2h-6.6v-2.2h1.6v-4.7h-1.6z"/></g></svg>
<svg class="abs" style="left:1685px;top:77px" width="34" height="33" viewBox="0 0 34 33"><path d="M11.2 21.2l2.6-11.6c.3-.9.9-1.4 1.8-1.4h9l-2.8 12.2c-.2.8-.7 1.2-1.5 1.2h-7.3c-.9 0-1.5.6-1.2 1.3.2.5.6.7 1.2.7h8.3l.2-1" fill="#5c5c5c" stroke="#5c5c5c" stroke-width="1"/><path d="M16.6 11.4h5.8 M16.1 13.7h5.8" stroke="#fff" stroke-width="1"/><path d="M12.8 22.4h8" stroke="#fff" stroke-width="0.9"/></svg>
<svg class="abs" style="left:1734px;top:84px" width="18" height="17" viewBox="0 0 18 17"><g fill="#555"><ellipse cx="9" cy="10.5" rx="5" ry="5.5"/><path d="M5.5 4.5a3.5 3 0 0 1 7 0z"/></g><g stroke="#555" stroke-width="1.3" fill="none"><path d="M1 9.5h16 M2.5 4l2.5 2.5 M15.5 4l-2.5 2.5 M2 16l3-3 M16 16l-3-3"/></g><path d="M9 6v10" stroke="#fff" stroke-width="1"/></svg>
<svg class="abs" style="left:1775.5px;top:84.5px" width="17" height="17" viewBox="0 0 18 18"><g fill="#555"><circle cx="9" cy="9" r="5.5"/><g stroke="#555" stroke-width="3"><path d="M9 1.5v15 M1.5 9h15 M3.7 3.7l10.6 10.6 M14.3 3.7l-10.6 10.6"/></g></g><circle cx="9" cy="9" r="2.5" fill="#fff"/></svg>
<svg class="abs" style="left:1819px;top:89px" width="12" height="8" viewBox="0 0 12 8"><path d="M0.5 0.5h11l-5.5 6.5z" fill="#81808e"/></svg>
<div class="abs" style="left:1469px;top:114px;width:369px;height:50px;background:#f2f2fb;border-bottom:1px solid #cdcdd6"></div>
<div class="btn" style="left:1621px;top:124px;width:116px;height:29px"></div>
<svg class="abs" style="left:1631px;top:131px" width="14" height="15" viewBox="0 0 14 15"><path d="M0.5 0.5h12.5l-4.8 6.5v7.5l-3-2v-5.5z" fill="#81808e"/></svg>
<div class="abs" style="left:1648px;top:130px;font-size:15.6px;color:#888;line-height:18px">all nodes</div>
<svg class="abs" style="left:1720px;top:135px" width="12" height="8" viewBox="0 0 12 8"><path d="M0.5 0.5h11l-5.5 6.5z" fill="#81808e"/></svg>
<div class="btn" style="left:1749px;top:124px;width:72px;height:29px"></div>
<svg class="abs" style="left:1759px;top:130px" width="14" height="16" viewBox="0 0 14 16"><path d="M1 3h11 M4.5 3v-1.5h4v1.5" fill="none" stroke="#81808e" stroke-width="1.5"/><path d="M2 4.5h9v10h-9z" fill="#81808e"/><path d="M4.5 6v7 M6.5 6v7 M8.5 6v7" stroke="#fff" stroke-width="0.9"/></svg>
<div class="abs" style="left:1776px;top:130px;font-size:15.6px;color:#888;line-height:18px">all</div>
<svg class="abs" style="left:1804px;top:135px" width="12" height="8" viewBox="0 0 12 8"><path d="M0.5 0.5h11l-5.5 6.5z" fill="#81808e"/></svg>
<div class="abs" style="left:1469px;top:864px;width:369px;height:32px;background:#f2f2fb;border-top:1px solid #ababb6;border-bottom:1px solid #ababb6"></div>
<div class="btn" style="left:1815px;top:869px;width:23px;height:23px;border-right:none"></div>
<svg class="abs" style="left:1818px;top:872px" width="17" height="15" viewBox="0 0 17 15"><rect x="1.5" y="1.5" width="14" height="9" rx="1" fill="none" stroke="#555" stroke-width="1.5"/><path d="M1.5 10h14" stroke="#555" stroke-width="2"/><path d="M6.5 12.5h4" stroke="#555" stroke-width="2"/></svg>
<div class="abs" style="left:0;top:896px;width:1838px;height:1px;background:#ececef"></div>
</body></html>
